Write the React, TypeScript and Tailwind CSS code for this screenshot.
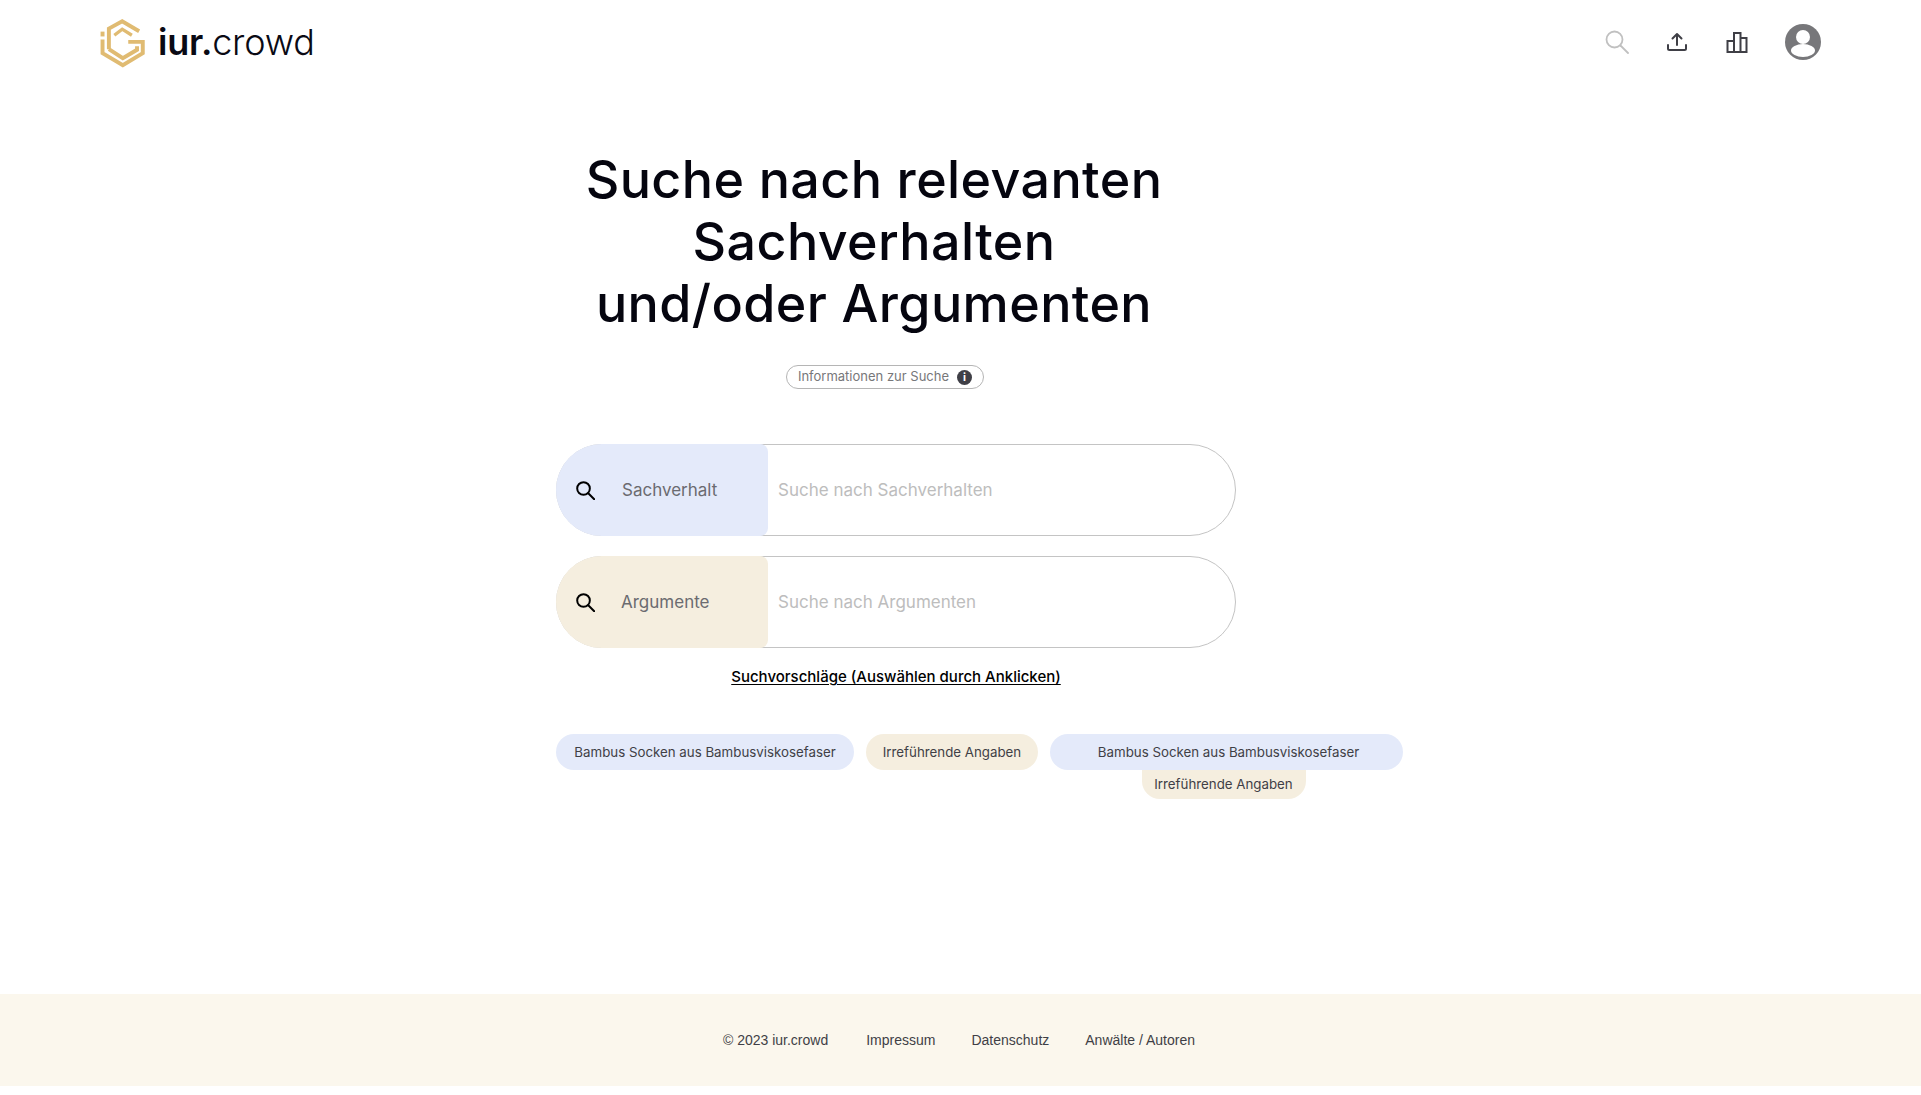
function Logo() {
  return (
    <svg viewBox="0 0 162 180" className="h-[55px] w-[49px]" fill="none" stroke="#e0bb72" strokeWidth="13">
      <path d="M36 112V44L80 20L136 53" />
      <path d="M15 54V70" />
      <path d="M15 80V125L82 165L148 125V88H100" />
      <path d="M36 112L82 142L129 114V102" />
      <path d="M54 66L80 46L112 66" strokeWidth="11" />
    </svg>
  );
}

function Magnifier({ className, color, width }: { className: string; color: string; width: number }) {
  return (
    <svg viewBox="0 0 24 24" className={className} fill="none" stroke={color} strokeWidth={width} strokeLinecap="round">
      <circle cx="9.500" cy="9.500" r="8" />
      <path d="M15.500 15.500L23 23" />
    </svg>
  );
}

function UploadIcon() {
  return (
    <svg viewBox="0 0 24 24" className="h-6 w-6" fill="none" stroke="#3f3f46" strokeWidth="2" strokeLinecap="round" strokeLinejoin="round">
      <path d="M12 15V4M7.500 8.500L12 4l4.500 4.500" />
      <path d="M3 15v3.500A1.500 1.500 0 0 0 4.500 20h15a1.500 1.500 0 0 0 1.500-1.500V15" />
    </svg>
  );
}

function BarsIcon() {
  return (
    <svg viewBox="0 0 24 24" className="h-6 w-6" fill="none" stroke="#3f3f46" strokeWidth="2">
      <path d="M2.500 22V11H9V22ZM9 22V3H15.500V22ZM15.500 22V8H21.500V22ZM2 22H22" />
    </svg>
  );
}

function Avatar() {
  return (
    <svg viewBox="0 0 36 36" className="h-9 w-9">
      <circle cx="18" cy="18" r="18" fill="#77777a" />
      <circle cx="18" cy="13" r="7" fill="#fff" />
      <ellipse cx="18" cy="26.500" rx="12" ry="6.500" fill="#fff" />
    </svg>
  );
}

function InfoIcon() {
  return (
    <span className="flex h-[15px] w-[15px] items-center justify-center rounded-full bg-[#3f3f46] text-[11px] font-bold leading-none text-white">i</span>
  );
}

function SearchRow({ label, placeholder, tint, labelClass }: { label: string; placeholder: string; tint: string; labelClass: string }) {
  return (
    <div className="flex h-[92px] w-[680px] items-stretch rounded-[46px] border border-[#c4c4c4]">
      <div className={`-m-px flex w-[212px] shrink-0 items-center rounded-l-[46px] rounded-r-lg ${tint}`}>
        <Magnifier className="ml-[20px] h-[19px] w-[19px]" color="#000" width={2.500} />
        <span className={`pt-[2px] text-[17px] text-[#6b6b70] ${labelClass}`}>{label}</span>
      </div>
      <div className="flex flex-1 items-center pl-[11px] pt-[2px] text-[17px] text-[#bdbdbd]">{placeholder}</div>
    </div>
  );
}

function Chip({ children, className }: { children: string; className: string }) {
  return <span className={`flex items-center justify-center text-[13.300px] text-[#3f3f46] ${className}`}>{children}</span>;
}

export default function App() {
  return (
    <div className="bg-white font-['Inter',sans-serif]">
      <header className="flex h-[84px] items-center justify-between pl-[98px] pr-[100px]">
        <div className="flex items-center gap-[11px]">
          <Logo />
          <span className="text-[36px] leading-none tracking-[-0.2px] text-[#0a0a14]">
            <span className="font-semibold">iur.</span>
            <span className="font-light">crowd</span>
          </span>
        </div>
        <div className="flex items-center">
          <Magnifier className="h-6 w-6" color="#c0c0c0" width={1.800} />
          <div className="ml-[36px]"><UploadIcon /></div>
          <div className="ml-[36px]"><BarsIcon /></div>
          <div className="ml-[36px]"><Avatar /></div>
        </div>
      </header>

      <main className="h-[910px] pl-[556px]">
        <h1 className="ml-[-106px] w-[848px] pt-[65px] text-center text-[52px] font-medium leading-[62px] tracking-[0.4px] text-[#05050f]">
          Suche nach relevanten
          <br />
          Sachverhalten
          <br />
          und/oder Argumenten
        </h1>
        <div className="ml-[230px] mt-[30px] flex h-[24px] w-[198px] items-center justify-center gap-2 rounded-full border border-[#b5b5b5] text-[13px] text-[#77777a]">
          Informationen zur Suche
          <InfoIcon />
        </div>
        <div className="mt-[55px] flex flex-col gap-5">
          <SearchRow label="Sachverhalt" placeholder="Suche nach Sachverhalten" tint="bg-[#e4eafa]" labelClass="ml-[27px]" />
          <SearchRow label="Argumente" placeholder="Suche nach Argumenten" tint="bg-[#f5eedf]" labelClass="ml-[26px]" />
        </div>
        <p className="mt-[19px] w-[680px] text-center text-[15px] font-medium leading-5 text-black underline underline-offset-2">
          Suchvorschläge (Auswählen durch Anklicken)
        </p>
        <div className="mt-[47px] flex items-start gap-3">
          <Chip className="h-9 w-[298px] rounded-[18px] bg-[#e4eafa] pt-px">Bambus Socken aus Bambusviskosefaser</Chip>
          <Chip className="h-9 w-[172px] rounded-[18px] bg-[#f5eedf] pt-px">Irreführende Angaben</Chip>
          <div className="flex w-[353px] flex-col items-center">
            <Chip className="h-9 w-full rounded-[18px] bg-[#e4eafa] pl-1 pt-px">Bambus Socken aus Bambusviskosefaser</Chip>
            <Chip className="h-[29px] w-[164px] -translate-x-[3px] rounded-b-[18px] bg-[#f5eedf]">Irreführende Angaben</Chip>
          </div>
        </div>
      </main>

      <footer className="flex h-[92px] items-center justify-center gap-[36px] bg-[#fbf7ed] pr-[3px] font-['Liberation_Sans',sans-serif] text-sm text-[#3f3f46]">
        <span className="mr-[2px]">© 2023 iur.crowd</span>
        <span>Impressum</span>
        <span>Datenschutz</span>
        <span>Anwälte / Autoren</span>
      </footer>
      <div className="h-[9px]" />
    </div>
  );
}
